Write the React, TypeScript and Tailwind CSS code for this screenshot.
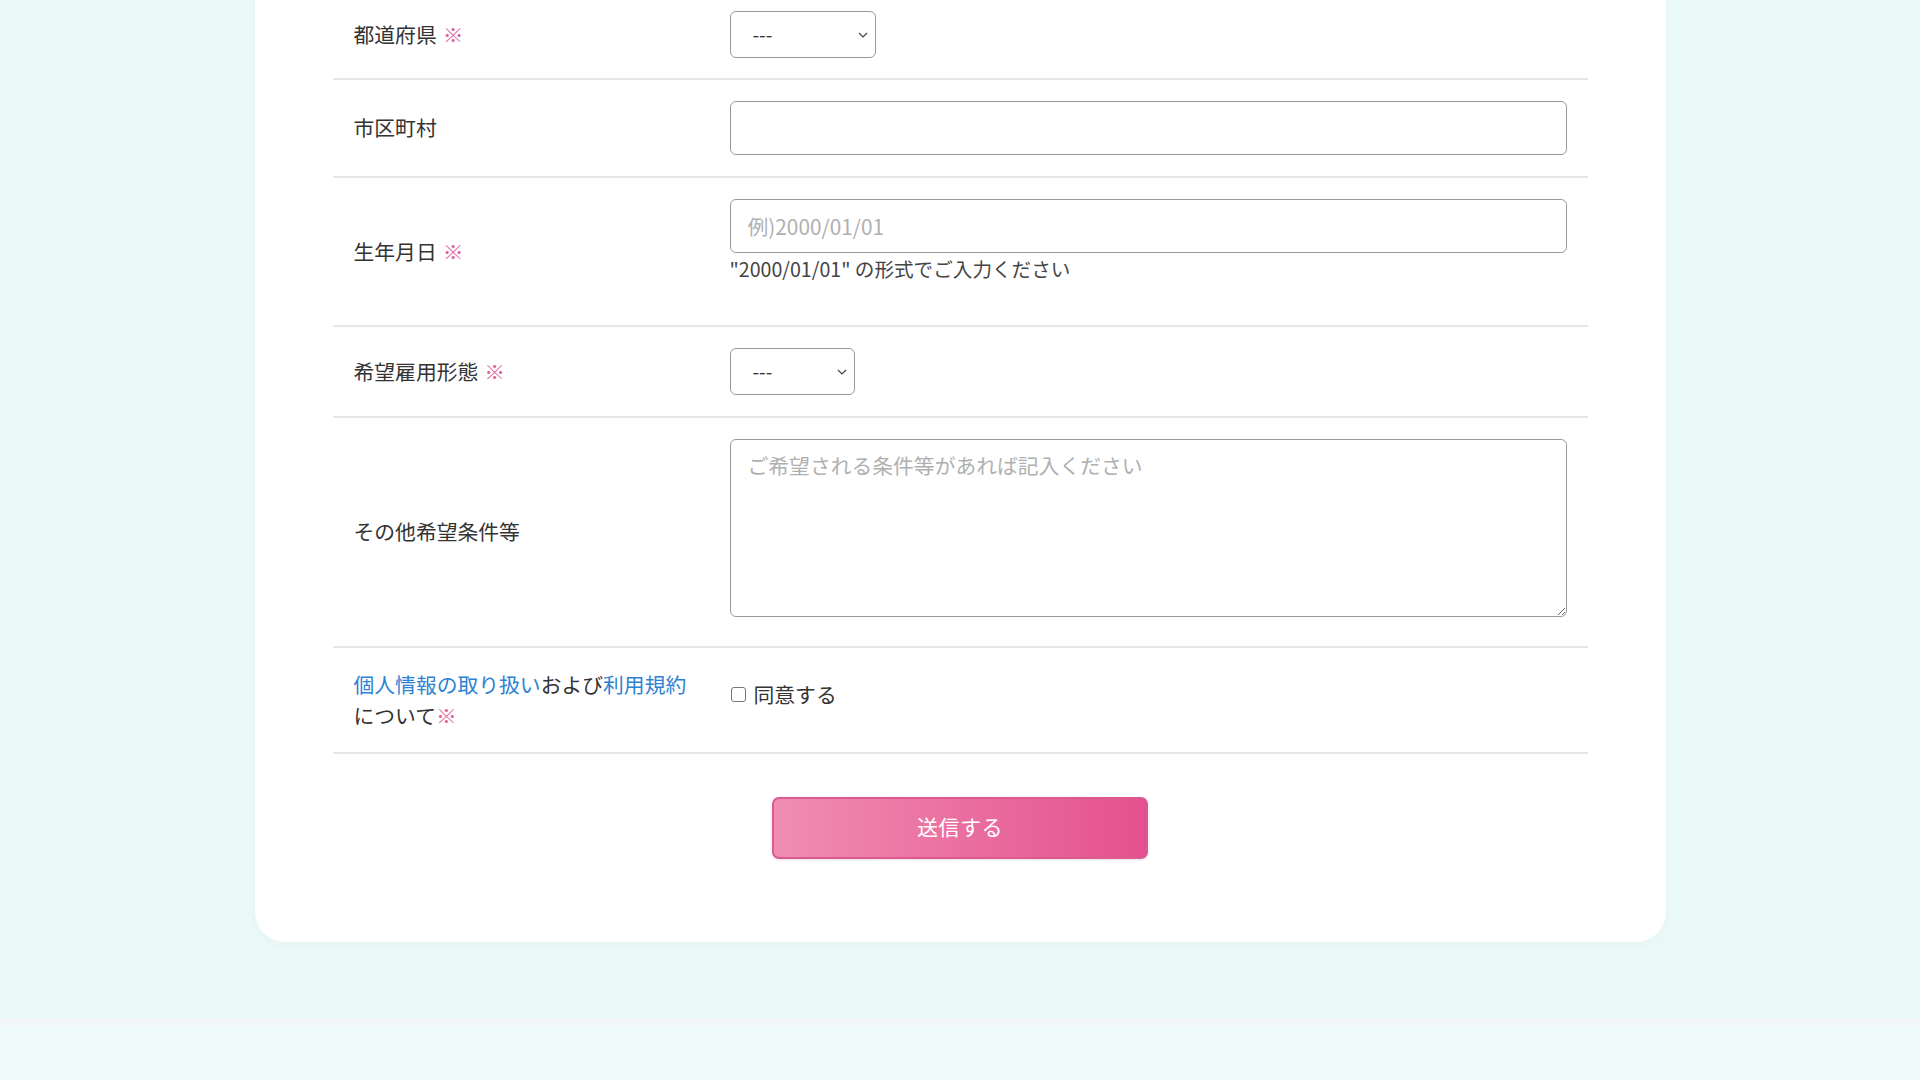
import React from "react";

const Req = ({ space = true }: { space?: boolean }) => (
  <span className={`text-[#e0639d] ${space ? "ml-[6px]" : ""}`}>※</span>
);

const SelectBox = ({ width }: { width: string }) => (
  <div className={`relative ${width}`}>
    <select className="w-full h-[47px] appearance-none rounded-[6px] border border-[#9a9a9a] bg-white pl-[22px] text-[19px] text-[#333] outline-none">
      <option>---</option>
    </select>
    <svg
      className="pointer-events-none absolute right-[8px] top-1/2 -translate-y-1/2"
      width="10"
      height="6"
      viewBox="0 0 10 6"
      fill="none"
    >
      <path d="M1 1L5 5L9 1" stroke="#444" strokeWidth="1.2" />
    </svg>
  </div>
);

const Row = ({
  label,
  children,
  className = "",
  labelClass = "items-center",
  contentClass = "items-center",
}: {
  label: React.ReactNode;
  children: React.ReactNode;
  className?: string;
  labelClass?: string;
  contentClass?: string;
}) => (
  <div className={`grid grid-cols-[376px_1fr] border-b-2 border-[#e6e6e6] ${className}`}>
    <div className={`flex px-[21px] ${labelClass}`}>{label}</div>
    <div className={`flex flex-col justify-center px-[21px] ${contentClass}`}>{children}</div>
  </div>
);

const App = () => {
  return (
    <div
      className="min-h-screen w-full bg-[#ecf9f9] text-[#333] text-[20.8px]"
      style={{ fontFamily: '"Noto Sans CJK JP", "Noto Sans", sans-serif' }}
    >
      <div className="pb-[77px]">
        <div className="mx-auto w-[1411px] rounded-b-[30px] bg-white px-[78px] pb-[83px] shadow-[0_2px_12px_rgba(0,0,0,0.03)]">
          <Row label={<span>都道府県<Req /></span>} className="pt-[11px] pb-[20px]" contentClass="items-start">
            <SelectBox width="w-[146px]" />
          </Row>

          <Row label={<span>市区町村</span>} className="py-[21px]">
            <input
              type="text"
              className="h-[54px] w-full rounded-[6px] border border-[#9a9a9a] px-[17px] text-[20.8px] outline-none"
            />
          </Row>

          <Row label={<span>生年月日<Req /></span>} className="py-[21px]">
            <div className="w-full">
              <input
                type="text"
                placeholder="例)2000/01/01"
                className="h-[54px] w-full rounded-[6px] border border-[#9a9a9a] px-[17px] text-[20.8px] outline-none placeholder:text-[#b0b0b0]"
              />
              <p className="mt-[1px] mb-[20px] text-[19.6px] leading-[30px] text-[#444]">
                "2000/01/01" の形式でご入力ください
              </p>
            </div>
          </Row>

          <Row label={<span>希望雇用形態<Req /></span>} className="py-[21px]" contentClass="items-start">
            <SelectBox width="w-[125px]" />
          </Row>

          <Row label={<span>その他希望条件等</span>} className="py-[21px]">
            <textarea
              placeholder="ご希望される条件等があれば記入ください"
              className="mb-[8px] block h-[178px] w-full rounded-[6px] border border-[#9a9a9a] px-[17px] pt-[10px] pb-[6px] text-[20.8px] leading-[30px] outline-none placeholder:text-[#b0b0b0]"
            />
          </Row>

          <Row
            label={
              <p className="leading-[31px] whitespace-nowrap">
                <a href="#" className="text-[#2e82d2]">個人情報の取り扱い</a>および
                <a href="#" className="text-[#2e82d2]">利用規約</a>
                <br />
                について<Req space={false} />
              </p>
            }
            className="py-[21px]"
            contentClass="items-start self-start pt-[10px]"
          >
            <label className="ml-[1px] flex items-center gap-[8px] leading-[31px]">
              <input
                type="checkbox"
                className="h-[15px] w-[15px] appearance-none rounded-[3px] border border-[#777] bg-white"
              />
              同意する
            </label>
          </Row>

          <div className="flex justify-center pt-[43px]">
            <button className="h-[62px] w-[376px] rounded-[7px] border-2 border-[#dc5a91] bg-gradient-to-r from-[#f08db0] via-[#ea6fa0] to-[#e4508f] pb-[2px] text-[21px] tracking-[0.5px] text-white shadow-[0_1px_3px_rgba(0,0,0,0.12)]">
              送信する
            </button>
          </div>
        </div>
      </div>
      <div className="h-[10px] bg-gradient-to-b from-[#f6f6f6] to-[#eef9f9]" />
      <div className="h-[60px] bg-[#eef9f9]" />
    </div>
  );
};

export default App;
